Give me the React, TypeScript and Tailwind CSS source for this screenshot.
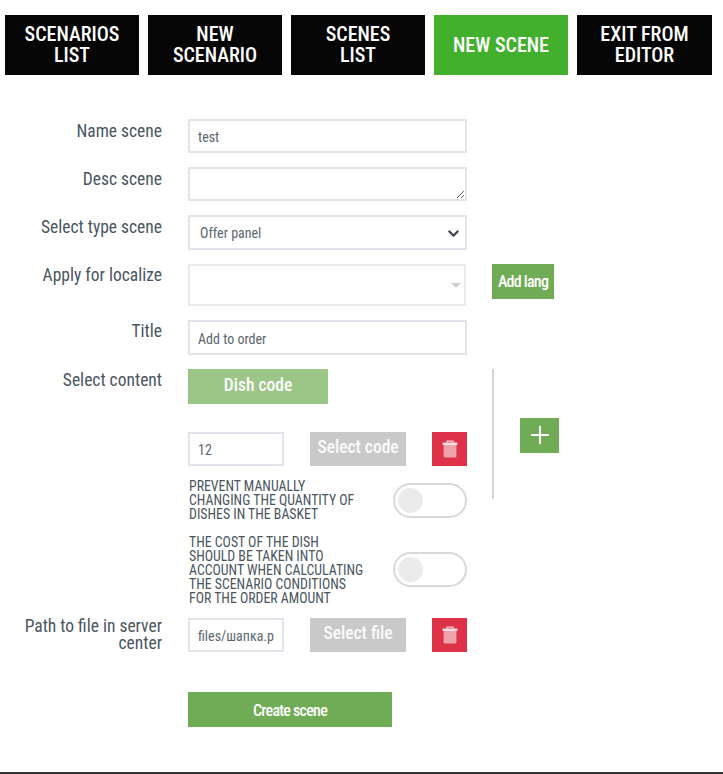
import { Plus, ChevronDown } from 'lucide-react';

const navItems = [
  { lines: ['SCENARIOS', 'LIST'], w: 'w-[134px]' },
  { lines: ['NEW', 'SCENARIO'], w: 'w-[134px]' },
  { lines: ['SCENES', 'LIST'], w: 'w-[134px]' },
  { lines: ['NEW SCENE'], w: 'w-[134px]', active: true },
  { lines: ['EXIT FROM', 'EDITOR'], w: 'w-[135px]' },
];

const labelCls = 'w-[162px] shrink-0 text-right text-[17.5px] leading-[17px] text-[#4a5560]';
const inputCls = 'h-[34px] border-2 border-[#e1e5eb] bg-white pl-[8px] pr-[8px] pt-[2px] text-[14px] text-[#5c6670] outline-none';
const smallCls = 'w-[180px] pl-px text-[13.8px] uppercase leading-[14px] text-[#4a5560]';
const greyBtnCls = 'flex h-[34px] w-[96px] items-center justify-center pb-[3px] bg-[#c9c9c9] text-[17.5px] font-medium text-white/90';

function Row({ label, children, className = '', labelPad = 'pt-[3px]' }: { label: string; children: React.ReactNode; className?: string; labelPad?: string }) {
  return (
    <div className={`flex items-start gap-[26px] ${className}`}>
      <div className={`${labelCls} ${labelPad}`}>{label}</div>
      {children}
    </div>
  );
}

function TrashButton() {
  return (
    <div className="flex h-[34px] w-[35px] items-center justify-center bg-[#dd3247]">
      <svg width="16" height="18" viewBox="0 0 16 18">
        <path d="M5 2.5 V1.2 H11 V2.5" fill="none" stroke="#fff" strokeOpacity="0.8" strokeWidth="1.2" />
        <rect x="0.5" y="2.5" width="15" height="2.4" rx="0.6" fill="#fff" fillOpacity="0.85" />
        <path d="M1.6 5 H14.4 V16.4 Q14.4 17.5 13.2 17.5 H2.8 Q1.6 17.5 1.6 16.4 Z" fill="#fff" fillOpacity="0.55" />
      </svg>
    </div>
  );
}

function Toggle({ className = '' }: { className?: string }) {
  return (
    <div className={`flex h-[35px] w-[74px] shrink-0 items-center rounded-full border-2 border-[#d8d8d8] bg-white pl-[3px] ${className}`}>
      <div className="h-[25px] w-[25px] rounded-full bg-[#ebebeb]" />
    </div>
  );
}

export default function App() {
  return (
    <div className="relative h-[774px] w-[723px] overflow-hidden bg-white font-['Roboto',sans-serif] [font-stretch:condensed]">
      <div className="flex gap-[9px] pl-[5px] pt-[15px]">
        {navItems.map((n) => (
          <div
            key={n.lines[0]}
            className={`flex h-[60px] ${n.w} items-center justify-center text-center text-[20px] font-medium leading-[21px] text-white ${n.active ? 'bg-[#42b02d]' : 'bg-[#060606]'}`}
          >
            <span className="whitespace-nowrap">
              {n.lines[0]}
              {n.lines[1] && <br />}
              {n.lines[1]}
            </span>
          </div>
        ))}
      </div>

      <div className="mt-[44px] flex flex-col">
        <Row label="Name scene" labelPad="pt-[4px]">
          <input className={`${inputCls} w-[279px]`} defaultValue="test" />
        </Row>
        <Row label="Desc scene" className="mt-[14px]" labelPad="pt-[4px]">
          <textarea className={`${inputCls} w-[279px]`} />
        </Row>
        <Row label="Select type scene" className="mt-[14px]" labelPad="pt-[4px]">
          <div className={`${inputCls} flex h-[35px] w-[279px] items-center justify-between !pl-[10px] !pr-[3px]`}>
            <span>Offer panel</span>
            <ChevronDown size={17} strokeWidth={3} className="text-[#444b52]" />
          </div>
        </Row>
        <Row label="Apply for localize" className="mt-[14px]">
          <div className="flex h-[42px] w-[278px] items-center justify-end border-2 border-[#e8eaed] pr-[3px]">
            <div className="h-0 w-0 border-x-[5px] border-t-[5px] border-x-transparent border-t-[#cfcfcf]" />
          </div>
          <div className="flex h-[35px] w-[62px] items-center justify-center bg-[#70ab55] text-[16px] font-medium tracking-[-0.75px] text-white">
            Add lang
          </div>
        </Row>
        <Row label="Title" className="mt-[14px]">
          <input className={`${inputCls} h-[35px] w-[279px]`} defaultValue="Add to order" />
        </Row>
        <Row label="Select content" className="mt-[14px]">
          <div className="w-[279px]">
            <div className="flex h-[35px] w-[140px] items-center justify-center pb-[2px] bg-[#9cc688] text-[17.5px] font-medium text-white">
              Dish code
            </div>
            <div className="mt-[28px] flex items-center justify-between">
              <input className={`${inputCls} w-[96px]`} defaultValue="12" />
              <div className={greyBtnCls}>Select code</div>
              <TrashButton />
            </div>
            <div className="mt-[13px] flex items-center justify-between">
              <div className={smallCls}>
                Prevent manually changing the quantity of dishes in the basket
              </div>
              <Toggle />
            </div>
            <div className="mt-[14px] flex items-center justify-between">
              <div className={smallCls}>
                The cost of the dish should be taken into account when calculating the scenario conditions for the order amount
              </div>
              <Toggle className="mb-[1px]" />
            </div>
          </div>
          <div className="-ml-px flex h-[130px] items-center border-l-2 border-[#d4d4d4] pl-[26px] pt-[2px]">
            <div className="flex h-[35px] w-[39px] items-center justify-center bg-[#70ab55]">
              <Plus size={28} className="text-white" strokeWidth={1.8} />
            </div>
          </div>
        </Row>
        <Row label="Path to file in server center" className="mt-[13px]" labelPad="pt-0">
          <div className="flex w-[279px] items-center justify-between">
            <input className={`${inputCls} w-[96px]`} defaultValue="files/шапка.png" />
            <div className={greyBtnCls}>Select file</div>
            <TrashButton />
          </div>
        </Row>
        <div className="ml-[188px] mt-[40px] flex h-[35px] w-[204px] items-center justify-center bg-[#70ab55] pt-[2px] text-[16px] font-medium tracking-[-0.75px] text-white">
          Create scene
        </div>
      </div>

      <div className="absolute bottom-0 left-0 h-[2px] w-full bg-[#333]" />
    </div>
  );
}
